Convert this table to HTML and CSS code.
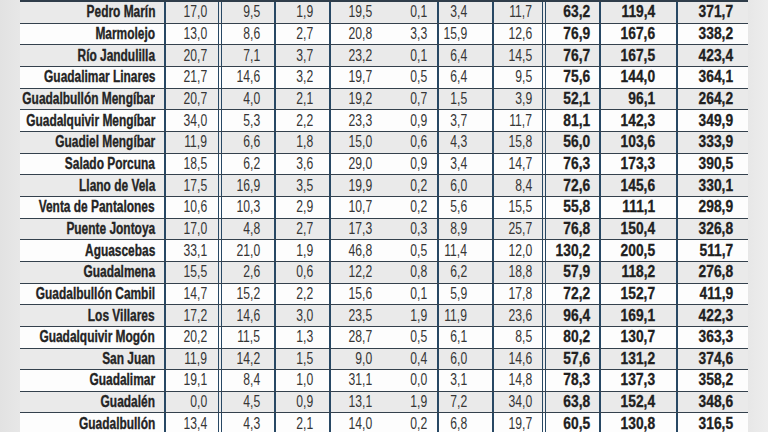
FILE: index.html
```html
<!DOCTYPE html>
<html lang="es">
<head>
<meta charset="utf-8">
<link rel="stylesheet" href="styles.css">
</head>
<body>
<div class="sheet">
  <div class="table">
    <div class="row"><div class="name"><span>Pedro Marín</span></div><div class="c1"><span>17,0</span></div><div class="c2"><span>9,5</span></div><div class="c3"><span>1,9</span></div><div class="c4"><span>19,5</span></div><div class="c5"><span>0,1</span></div><div class="c6"><span>3,4</span></div><div class="c7"><span>11,7</span></div><div class="c8"><span>63,2</span></div><div class="c9"><span>119,4</span></div><div class="c10"><span>371,7</span></div></div>
    <div class="row"><div class="name"><span>Marmolejo</span></div><div class="c1"><span>13,0</span></div><div class="c2"><span>8,6</span></div><div class="c3"><span>2,7</span></div><div class="c4"><span>20,8</span></div><div class="c5"><span>3,3</span></div><div class="c6"><span>15,9</span></div><div class="c7"><span>12,6</span></div><div class="c8"><span>76,9</span></div><div class="c9"><span>167,6</span></div><div class="c10"><span>338,2</span></div></div>
    <div class="row"><div class="name"><span>Río Jandulilla</span></div><div class="c1"><span>20,7</span></div><div class="c2"><span>7,1</span></div><div class="c3"><span>3,7</span></div><div class="c4"><span>23,2</span></div><div class="c5"><span>0,1</span></div><div class="c6"><span>6,4</span></div><div class="c7"><span>14,5</span></div><div class="c8"><span>76,7</span></div><div class="c9"><span>167,5</span></div><div class="c10"><span>423,4</span></div></div>
    <div class="row"><div class="name"><span>Guadalimar Linares</span></div><div class="c1"><span>21,7</span></div><div class="c2"><span>14,6</span></div><div class="c3"><span>3,2</span></div><div class="c4"><span>19,7</span></div><div class="c5"><span>0,5</span></div><div class="c6"><span>6,4</span></div><div class="c7"><span>9,5</span></div><div class="c8"><span>75,6</span></div><div class="c9"><span>144,0</span></div><div class="c10"><span>364,1</span></div></div>
    <div class="row"><div class="name"><span>Guadalbullón Mengíbar</span></div><div class="c1"><span>20,7</span></div><div class="c2"><span>4,0</span></div><div class="c3"><span>2,1</span></div><div class="c4"><span>19,2</span></div><div class="c5"><span>0,7</span></div><div class="c6"><span>1,5</span></div><div class="c7"><span>3,9</span></div><div class="c8"><span>52,1</span></div><div class="c9"><span>96,1</span></div><div class="c10"><span>264,2</span></div></div>
    <div class="row"><div class="name"><span>Guadalquivir Mengíbar</span></div><div class="c1"><span>34,0</span></div><div class="c2"><span>5,3</span></div><div class="c3"><span>2,2</span></div><div class="c4"><span>23,3</span></div><div class="c5"><span>0,9</span></div><div class="c6"><span>3,7</span></div><div class="c7"><span>11,7</span></div><div class="c8"><span>81,1</span></div><div class="c9"><span>142,3</span></div><div class="c10"><span>349,9</span></div></div>
    <div class="row"><div class="name"><span>Guadiel Mengíbar</span></div><div class="c1"><span>11,9</span></div><div class="c2"><span>6,6</span></div><div class="c3"><span>1,8</span></div><div class="c4"><span>15,0</span></div><div class="c5"><span>0,6</span></div><div class="c6"><span>4,3</span></div><div class="c7"><span>15,8</span></div><div class="c8"><span>56,0</span></div><div class="c9"><span>103,6</span></div><div class="c10"><span>333,9</span></div></div>
    <div class="row"><div class="name"><span>Salado Porcuna</span></div><div class="c1"><span>18,5</span></div><div class="c2"><span>6,2</span></div><div class="c3"><span>3,6</span></div><div class="c4"><span>29,0</span></div><div class="c5"><span>0,9</span></div><div class="c6"><span>3,4</span></div><div class="c7"><span>14,7</span></div><div class="c8"><span>76,3</span></div><div class="c9"><span>173,3</span></div><div class="c10"><span>390,5</span></div></div>
    <div class="row"><div class="name"><span>Llano de Vela</span></div><div class="c1"><span>17,5</span></div><div class="c2"><span>16,9</span></div><div class="c3"><span>3,5</span></div><div class="c4"><span>19,9</span></div><div class="c5"><span>0,2</span></div><div class="c6"><span>6,0</span></div><div class="c7"><span>8,4</span></div><div class="c8"><span>72,6</span></div><div class="c9"><span>145,6</span></div><div class="c10"><span>330,1</span></div></div>
    <div class="row"><div class="name"><span>Venta de Pantalones</span></div><div class="c1"><span>10,6</span></div><div class="c2"><span>10,3</span></div><div class="c3"><span>2,9</span></div><div class="c4"><span>10,7</span></div><div class="c5"><span>0,2</span></div><div class="c6"><span>5,6</span></div><div class="c7"><span>15,5</span></div><div class="c8"><span>55,8</span></div><div class="c9"><span>111,1</span></div><div class="c10"><span>298,9</span></div></div>
    <div class="row"><div class="name"><span>Puente Jontoya</span></div><div class="c1"><span>17,0</span></div><div class="c2"><span>4,8</span></div><div class="c3"><span>2,7</span></div><div class="c4"><span>17,3</span></div><div class="c5"><span>0,3</span></div><div class="c6"><span>8,9</span></div><div class="c7"><span>25,7</span></div><div class="c8"><span>76,8</span></div><div class="c9"><span>150,4</span></div><div class="c10"><span>326,8</span></div></div>
    <div class="row"><div class="name"><span>Aguascebas</span></div><div class="c1"><span>33,1</span></div><div class="c2"><span>21,0</span></div><div class="c3"><span>1,9</span></div><div class="c4"><span>46,8</span></div><div class="c5"><span>0,5</span></div><div class="c6"><span>11,4</span></div><div class="c7"><span>12,0</span></div><div class="c8"><span>130,2</span></div><div class="c9"><span>200,5</span></div><div class="c10"><span>511,7</span></div></div>
    <div class="row"><div class="name"><span>Guadalmena</span></div><div class="c1"><span>15,5</span></div><div class="c2"><span>2,6</span></div><div class="c3"><span>0,6</span></div><div class="c4"><span>12,2</span></div><div class="c5"><span>0,8</span></div><div class="c6"><span>6,2</span></div><div class="c7"><span>18,8</span></div><div class="c8"><span>57,9</span></div><div class="c9"><span>118,2</span></div><div class="c10"><span>276,8</span></div></div>
    <div class="row"><div class="name"><span>Guadalbullón Cambil</span></div><div class="c1"><span>14,7</span></div><div class="c2"><span>15,2</span></div><div class="c3"><span>2,2</span></div><div class="c4"><span>15,6</span></div><div class="c5"><span>0,1</span></div><div class="c6"><span>5,9</span></div><div class="c7"><span>17,8</span></div><div class="c8"><span>72,2</span></div><div class="c9"><span>152,7</span></div><div class="c10"><span>411,9</span></div></div>
    <div class="row"><div class="name"><span>Los Villares</span></div><div class="c1"><span>17,2</span></div><div class="c2"><span>14,6</span></div><div class="c3"><span>3,0</span></div><div class="c4"><span>23,5</span></div><div class="c5"><span>1,9</span></div><div class="c6"><span>11,9</span></div><div class="c7"><span>23,6</span></div><div class="c8"><span>96,4</span></div><div class="c9"><span>169,1</span></div><div class="c10"><span>422,3</span></div></div>
    <div class="row"><div class="name"><span>Guadalquivir Mogón</span></div><div class="c1"><span>20,2</span></div><div class="c2"><span>11,5</span></div><div class="c3"><span>1,3</span></div><div class="c4"><span>28,7</span></div><div class="c5"><span>0,5</span></div><div class="c6"><span>6,1</span></div><div class="c7"><span>8,5</span></div><div class="c8"><span>80,2</span></div><div class="c9"><span>130,7</span></div><div class="c10"><span>363,3</span></div></div>
    <div class="row"><div class="name"><span>San Juan</span></div><div class="c1"><span>11,9</span></div><div class="c2"><span>14,2</span></div><div class="c3"><span>1,5</span></div><div class="c4"><span>9,0</span></div><div class="c5"><span>0,4</span></div><div class="c6"><span>6,0</span></div><div class="c7"><span>14,6</span></div><div class="c8"><span>57,6</span></div><div class="c9"><span>131,2</span></div><div class="c10"><span>374,6</span></div></div>
    <div class="row"><div class="name"><span>Guadalimar</span></div><div class="c1"><span>19,1</span></div><div class="c2"><span>8,4</span></div><div class="c3"><span>1,0</span></div><div class="c4"><span>31,1</span></div><div class="c5"><span>0,0</span></div><div class="c6"><span>3,1</span></div><div class="c7"><span>14,8</span></div><div class="c8"><span>78,3</span></div><div class="c9"><span>137,3</span></div><div class="c10"><span>358,2</span></div></div>
    <div class="row"><div class="name"><span>Guadalén</span></div><div class="c1"><span>0,0</span></div><div class="c2"><span>4,5</span></div><div class="c3"><span>0,9</span></div><div class="c4"><span>13,1</span></div><div class="c5"><span>1,9</span></div><div class="c6"><span>7,2</span></div><div class="c7"><span>34,0</span></div><div class="c8"><span>63,8</span></div><div class="c9"><span>152,4</span></div><div class="c10"><span>348,6</span></div></div>
    <div class="row"><div class="name"><span>Guadalbullón</span></div><div class="c1"><span>13,4</span></div><div class="c2"><span>4,3</span></div><div class="c3"><span>2,1</span></div><div class="c4"><span>14,0</span></div><div class="c5"><span>0,2</span></div><div class="c6"><span>6,8</span></div><div class="c7"><span>19,7</span></div><div class="c8"><span>60,5</span></div><div class="c9"><span>130,8</span></div><div class="c10"><span>316,5</span></div></div>
  </div>
</div>
</body>
</html>
```

FILE: styles.css
```css
html, body {
  margin: 0;
  padding: 0;
}

body {
  width: 768px;
  height: 432px;
  overflow: hidden;
  background: linear-gradient(to right, #e2e2e2 0px, #e7e7e7 20px, #e7e7e7 748px, #ededed 768px);
  font-family: "Liberation Sans", Arial, sans-serif;
}

.sheet {
  padding-left: 20px;
  padding-right: 20px;
}

.table {
  width: 728px;
  border-top: 2px solid #2f3d4a;
}

.row {
  display: grid;
  grid-template-columns: 146px 56px 54px 55px 53px 55px 55px 52px 55px 77px 70px;
  height: 21.67px;
  box-sizing: border-box;
  border-bottom: 1px solid #34414d;
  background: #fdfdfd;
}

.row:nth-child(odd) {
  background: #eaeaea;
}

.row > div {
  box-sizing: border-box;
  display: flex;
  align-items: center;
  justify-content: flex-end;
  font-size: 16px;
  color: #363636;
  white-space: nowrap;
  border-right: 2px solid #284864;
}

.row > div > span {
  display: inline-block;
  transform: scaleX(0.76);
  transform-origin: 100% 50%;
}

.row > .name {
  font-weight: bold;
  color: #242424;
  padding-right: 9px;
  -webkit-text-stroke: 0.35px #242424;
}

.row > .name > span {
  transform: scaleX(0.745);
}

.row > .c1 { padding-right: 11px; border-right: 4px double #284864; }
.row > .c2 { padding-right: 14px; }
.row > .c3 { padding-right: 16px; }
.row > .c4 { padding-right: 12px; border-right: none; }
.row > .c5 { padding-right: 10px; }
.row > .c6 { padding-right: 25px; }
.row > .c7 { padding-right: 10px; border-right: 4px double #284864; }
.row > .c8 { padding-right: 9px; }
.row > .c9 { padding-right: 21px; }
.row > .c10 { padding-right: 15px; border-right: none; }

.row > .c8,
.row > .c9,
.row > .c10 {
  font-weight: bold;
  color: #202020;
  -webkit-text-stroke: 0.3px #202020;
}

.row > .c8 > span,
.row > .c9 > span,
.row > .c10 > span {
  transform: scaleX(0.86);
}
```
